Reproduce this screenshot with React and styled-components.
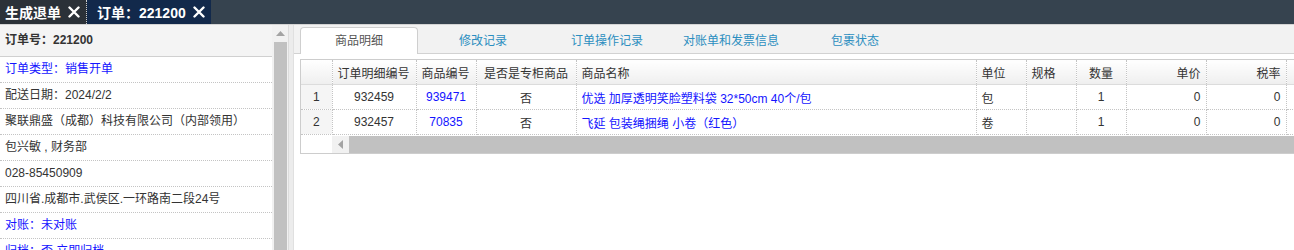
import React from 'react'
import styled, { createGlobalStyle } from 'styled-components'

const GlobalStyle = createGlobalStyle`
  html, body { margin: 0; padding: 0; background: #fff; }
  body {
    font-family: "Liberation Sans", "Noto Sans CJK SC", sans-serif;
    font-size: 12px;
    color: #333;
  }
`

const Page = styled.div`
  width: 1294px;
  height: 250px;
  overflow: hidden;
  display: flex;
  flex-direction: column;
`

const TopBar = styled.div`
  height: 24px;
  flex: none;
  display: flex;
  background: #36434f;
`

const TopTab = styled.div`
  display: flex;
  align-items: center;
  gap: 7px;
  padding: 0 6px 0 ${p => p.$pad}px;
  background: ${p => (p.$active ? '#12294b' : '#2b3138')};
  border-right: ${p => (p.$active ? 'none' : '1px dotted #c8ccd0')};
  color: #fff;
  font-size: 14px;
  font-weight: bold;
  white-space: nowrap;
`

const Main = styled.div`
  flex: 1;
  display: flex;
  border-top: 1px solid #d4d4d4;
  min-height: 0;
`

const LeftPanel = styled.div`
  width: 288px;
  flex: none;
  display: flex;
  overflow: hidden;
`

const InfoList = styled.div`
  width: 272px;
  flex: none;
`

const InfoHead = styled.div`
  height: 31px;
  line-height: 31px;
  padding-left: 5px;
  background: #f4f4f4;
  border-bottom: 1px solid #d0d0d0;
  font-weight: bold;
  color: #333;
`

const InfoRow = styled.div`
  height: 25px;
  line-height: 25px;
  padding-left: 5px;
  border-bottom: 1px dotted #c4c4c4;
  color: ${p => (p.$link ? '#1414ff' : '#333')};
  white-space: nowrap;
`

const VScroll = styled.div`
  width: 16px;
  flex: none;
  background: #f1f1f1;
  display: flex;
  flex-direction: column;
  align-items: center;
`

const ArrowBox = styled.div`
  height: 17px;
  width: 16px;
  display: flex;
  align-items: center;
  justify-content: center;
  flex: none;
`

const VThumb = styled.div`
  flex: 1;
  width: 13px;
  background: #c1c1c1;
`

const Splitter = styled.div`
  width: 4px;
  flex: none;
  background: #ececec;
  border-left: 1px solid #dcdcdc;
  border-right: 1px solid #e0e0e0;
`

const RightPanel = styled.div`
  flex: 1;
  min-width: 0;
  overflow: hidden;
  background: #fff;
`

const TabStrip = styled.div`
  height: 28px;
  background: #f2f2f2;
  border-bottom: 1px solid #d2d2d2;
  display: flex;
  align-items: flex-end;
  padding-left: 6px;
`

const Tab = styled.div`
  box-sizing: border-box;
  width: ${p => (p.$active ? '118px' : '124px')};
  margin-right: ${p => (p.$active ? '3px' : '0')};
  height: 27px;
  line-height: 26px;
  text-align: center;
  flex: none;
  margin-bottom: -1px;
  color: ${p => (p.$active ? '#555' : '#2b8ec0')};
  background: ${p => (p.$active ? '#fff' : 'transparent')};
  border: ${p => (p.$active ? '1px solid #cfcfcf' : '1px solid transparent')};
  border-bottom: none;
  border-radius: 4px 4px 0 0;
`

const GridFrame = styled.div`
  margin: 5px 0 0 6px;
  width: 1300px;
  border: 1px solid #cdcdcd;
`

const Table = styled.table`
  border-collapse: collapse;
  table-layout: fixed;
  width: ${p => p.$width}px;
`

const Th = styled.th`
  height: 24px;
  padding: 0 5px;
  font-weight: normal;
  color: #333;
  text-align: ${p => p.$align || 'left'};
  background: linear-gradient(#ffffff, #efefef);
  border-right: 1px dotted #c4c4c4;
  border-bottom: 1px solid #dcdcdc;
  white-space: nowrap;
  overflow: hidden;
`

const Td = styled.td`
  height: 24px;
  padding: 0 5px;
  text-align: ${p => p.$align || 'left'};
  color: ${p => (p.$link ? '#1414ff' : '#333')};
  background: ${p => (p.$num ? '#f5f5f5' : '#fff')};
  border-right: 1px dotted #c4c4c4;
  border-bottom: 1px dotted #c4c4c4;
  white-space: nowrap;
  overflow: hidden;
`

const HScroll = styled.div`
  display: flex;
  height: 17px;
  margin-top: 1px;
`

const HSpacer = styled.div`
  width: 31px;
  flex: none;
  background: #fff;
`

const HArrow = styled.div`
  width: 17px;
  flex: none;
  background: #f1f1f1;
  display: flex;
  align-items: center;
  justify-content: center;
`

const HThumb = styled.div`
  flex: 1;
  background: #c1c1c1;
`

function CloseIcon() {
  return (
    <svg width="12" height="12" viewBox="0 0 12 12">
      <path d="M1.5 1.5 L10.5 10.5 M10.5 1.5 L1.5 10.5" stroke="#fff" strokeWidth="2.4" strokeLinecap="round" />
    </svg>
  )
}

function Tri({ dir }) {
  const d = dir === 'up' ? 'M0 6 L4.5 1 L9 6 Z' : 'M6 0 L6 9 L1 4.5 Z'
  const size = dir === 'up' ? [9, 7] : [7, 9]
  return (
    <svg width={size[0]} height={size[1]} viewBox={`0 0 ${size[0]} ${size[1]}`}>
      <path d={d} fill="#a3a3a3" />
    </svg>
  )
}

const info = [
  { text: '订单类型：销售开单', link: true },
  { text: '配送日期：2024/2/2' },
  { text: '聚联鼎盛（成都）科技有限公司（内部领用）' },
  { text: '包兴敏 , 财务部' },
  { text: '028-85450909' },
  { text: '四川省.成都市.武侯区.一环路南二段24号' },
  { text: '对账：未对账', link: true },
  { text: '归档：否 立即归档', link: true },
]

const tabs = ['商品明细', '修改记录', '订单操作记录', '对账单和发票信息', '包裹状态']

// head = header alignment, align = body alignment
const columns = [
  { title: '', width: 31, head: 'center', align: 'center' },
  { title: '订单明细编号', width: 84, head: 'left', align: 'center' },
  { title: '商品编号', width: 60, head: 'left', align: 'center' },
  { title: '是否是专柜商品', width: 100, head: 'center', align: 'center' },
  { title: '商品名称', width: 400 },
  { title: '单位', width: 50 },
  { title: '规格', width: 50 },
  { title: '数量', width: 50, head: 'center', align: 'center' },
  { title: '单价', width: 80, head: 'right', align: 'right' },
  { title: '税率', width: 80, head: 'right', align: 'right' },
  { title: '', width: 80, head: 'right', align: 'right' },
  { title: '', width: 80, head: 'right', align: 'right' },
]

const tableWidth = columns.reduce((s, c) => s + c.width, 0)

const rows = [
  ['1', '932459', '939471', '否', '优选 加厚透明笑脸塑料袋 32*50cm 40个/包', '包', '', '1', '0', '0', '', ''],
  ['2', '932457', '70835', '否', '飞延 包装绳捆绳 小卷（红色）', '卷', '', '1', '0', '0', '', ''],
]

const linkCols = [2, 4]

export default function App() {
  return (
    <Page>
      <GlobalStyle />
      <TopBar>
        <TopTab $pad={5}>生成退单<CloseIcon /></TopTab>
        <TopTab $pad={10} $active>订单：221200<CloseIcon /></TopTab>
      </TopBar>
      <Main>
        <LeftPanel>
          <InfoList>
            <InfoHead>订单号：221200</InfoHead>
            {info.map(r => (
              <InfoRow key={r.text} $link={r.link}>{r.text}</InfoRow>
            ))}
          </InfoList>
          <VScroll>
            <ArrowBox><Tri dir="up" /></ArrowBox>
            <VThumb />
          </VScroll>
        </LeftPanel>
        <Splitter />
        <RightPanel>
          <TabStrip>
            {tabs.map((t, i) => (
              <Tab key={t} $active={i === 0}>{t}</Tab>
            ))}
          </TabStrip>
          <GridFrame>
            <Table $width={tableWidth}>
              <colgroup>
                {columns.map((c, i) => <col key={i} style={{ width: c.width }} />)}
              </colgroup>
              <thead>
                <tr>
                  {columns.map((c, i) => (
                    <Th key={i} $align={c.head}>{c.title}</Th>
                  ))}
                </tr>
              </thead>
              <tbody>
                {rows.map(r => (
                  <tr key={r[0]}>
                    {r.map((v, i) => (
                      <Td key={i} $num={i === 0} $link={linkCols.includes(i)} $align={columns[i].align}>{v}</Td>
                    ))}
                  </tr>
                ))}
              </tbody>
            </Table>
            <HScroll>
              <HSpacer />
              <HArrow><Tri dir="left" /></HArrow>
              <HThumb />
            </HScroll>
          </GridFrame>
        </RightPanel>
      </Main>
    </Page>
  )
}
